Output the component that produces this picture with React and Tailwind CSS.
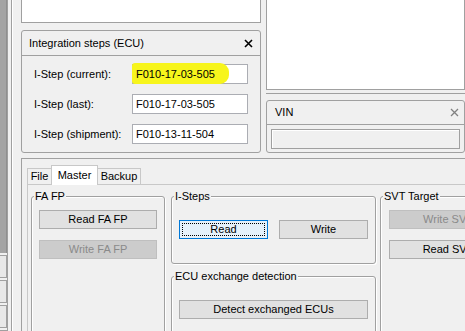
function XIcon({ color = "#000", sw = 1.6 }) {
  return (
    <svg width="9" height="9" viewBox="0 0 9 9" className="block">
      <path d="M1 1 L8 8 M8 1 L1 8" stroke={color} strokeWidth={sw} fill="none" />
    </svg>
  );
}

function Btn({ children, className = "", disabled = false, focused = false }) {
  if (disabled) {
    return (
      <div className={"h-[19px] border border-[#bfbfbf] bg-[#cccccc] text-[#8a8a8a] flex items-center justify-center whitespace-nowrap overflow-hidden shrink-0 " + className}>
        {children}
      </div>
    );
  }
  if (focused) {
    return (
      <div className={"relative h-[19px] border border-[#0078d7] bg-[#e5f1fb] flex items-center justify-center whitespace-nowrap shrink-0 " + className}>
        <span className="absolute inset-[2px] border border-dotted border-black" />
        {children}
      </div>
    );
  }
  return (
    <div className={"h-[19px] border border-[#adadad] bg-[#e1e1e1] flex items-center justify-center whitespace-nowrap overflow-hidden shrink-0 " + className}>
      {children}
    </div>
  );
}

function Group({ label, className = "", children }) {
  return (
    <div className={"relative border border-[#a0a0a0] rounded-[3px] shadow-[inset_1px_1px_0_#ffffff,1px_1px_0_#ffffff] shrink-0 " + className}>
      <span className="absolute -top-[7px] left-[2px] bg-[#f0f0f0] px-[1px] leading-[12px] whitespace-nowrap">{label}</span>
      {children}
    </div>
  );
}

function Row({ label, value, highlight = false }) {
  return (
    <div className="flex items-center h-[20px]">
      <div className="w-[110px] pl-[12px] whitespace-nowrap">{label}</div>
      <div className="relative w-[116px] h-[20px] border border-[#abadb3] bg-white flex items-center pl-[3px]">
        {highlight && (
          <span className="absolute -left-[1px] -top-[2px] w-[97px] h-[21px] bg-[#f7f51c] rounded-r-[9px] rounded-l-[3px]" />
        )}
        <span className="relative">{value}</span>
      </div>
    </div>
  );
}

export default function App() {
  return (
    <div className="w-[465px] h-[331px] overflow-hidden bg-[#f0f0f0] flex font-['Liberation_Sans',Arial,sans-serif] text-[11px] leading-none text-black">
      {/* left edge */}
      <div className="w-[21px] h-full flex shrink-0">
        <div className="w-[7px] h-full flex flex-col shrink-0">
          <div className="h-[253px] bg-[#a4a4a4] border-r border-[#8f8f8f] shrink-0" />
          <div className="flex flex-col gap-[2px] mt-[2px]">
            <div className="h-[23px] border border-l-0 border-[#a0a0a0] bg-[#e8e8e8]" />
            <div className="h-[23px] border border-l-0 border-[#a0a0a0] bg-[#e8e8e8]" />
            <div className="h-[23px] border border-l-0 border-[#a0a0a0] bg-[#e8e8e8]" />
            <div className="h-[23px] border border-l-0 border-[#a0a0a0] bg-[#e8e8e8]" />
          </div>
        </div>
        <div className="w-[1px] bg-[#a0a0a0] shrink-0" />
        <div className="w-[3px] shrink-0" />
        <div className="w-[1px] bg-[#a0a0a0] shrink-0" />
        <div className="w-[1px] bg-white shrink-0" />
      </div>

      {/* main */}
      <div className="w-[444px] h-full flex flex-col shrink-0">
        {/* top row */}
        <div className="h-[158px] flex shrink-0">
          {/* left column */}
          <div className="w-[240px] flex flex-col shrink-0">
            <div className="h-[23px] bg-white border-x border-b border-[#a0a0a0] shrink-0" />
            <div className="mt-[7px] h-[123px] border border-[#a0a0a0] rounded-[3px] flex flex-col shrink-0">
              <div className="h-[25px] border-b border-[#a0a0a0] flex items-center justify-between pl-[7px] pr-[7px] shrink-0">
                <span className="whitespace-nowrap">Integration steps (ECU)</span>
                <XIcon />
              </div>
              <div className="pt-[8px] flex flex-col gap-[10px]">
                <Row label="I-Step (current):" value="F010-17-03-505" highlight />
                <Row label="I-Step (last):" value="F010-17-03-505" />
                <Row label="I-Step (shipment):" value="F010-13-11-504" />
              </div>
            </div>
          </div>
          {/* right column */}
          <div className="ml-[5px] w-[199px] flex flex-col shrink-0">
            <div className="h-[90px] bg-white border-x border-b border-[#a0a0a0] shrink-0" />
            <div className="mt-[3px] h-[7px] border-t border-[#a0a0a0] shrink-0" />
            <div className="h-[53px] border border-[#a0a0a0] rounded-[3px] flex flex-col shrink-0">
              <div className="h-[24px] border-b border-[#a0a0a0] flex items-center justify-between pl-[8px] pr-[5px] shrink-0">
                <span>VIN</span>
                <XIcon color="#808080" sw={1.3} />
              </div>
              <div className="mx-[4px] mt-[4px] h-[20px] border border-[#a0a0a0] shadow-[inset_1px_1px_0_#ffffff] bg-[#f0f0f0]" />
            </div>
          </div>
        </div>

        {/* tab area */}
        <div className="flex-1 border-t border-l border-[#a0a0a0] pt-[6px] pl-[5px] flex flex-col min-h-0">
          <div className="flex items-end h-[19px] shrink-0 relative z-10">
            <div className="h-[16px] w-[25px] border border-[#c8c8c8] border-b-0 bg-[#f0f0f0] flex items-center justify-center">File</div>
            <div className="h-[20px] w-[47px] -mb-[1px] border border-[#c8c8c8] border-b-0 bg-white flex items-center justify-center -ml-[1px]">Master</div>
            <div className="h-[16px] w-[44px] border border-[#c8c8c8] border-b-0 bg-[#f0f0f0] flex items-center justify-center -ml-[1px]">Backup</div>
          </div>
          <div className="flex-1 border-t border-l border-[#c8c8c8] bg-[#f0f0f0] pl-[3px] pt-[11px] flex items-start min-h-0">
            <Group label="FA FP" className="w-[134px] h-[150px] pl-[7px] pt-[13px]">
              <div className="flex flex-col gap-[11px]">
                <Btn className="w-[118px]">Read FA FP</Btn>
                <Btn className="w-[118px]" disabled>Write FA FP</Btn>
              </div>
            </Group>
            <div className="ml-[6px] w-[205px] flex flex-col shrink-0">
              <Group label="I-Steps" className="h-[68px] pl-[7px] pt-[23px]">
                <div className="flex gap-[11px]">
                  <Btn className="w-[89px]" focused>Read</Btn>
                  <Btn className="w-[89px]">Write</Btn>
                </div>
              </Group>
              <Group label="ECU exchange detection" className="mt-[12px] h-[70px] pl-[7px] pt-[23px]">
                <Btn className="w-[189px]">Detect exchanged ECUs</Btn>
              </Group>
            </div>
            <Group label="SVT Target" className="ml-[4px] w-[130px] h-[150px] pl-[8px] pt-[13px]">
              <div className="flex flex-col gap-[11px]">
                <Btn className="w-[118px]" disabled>Write SVT</Btn>
                <Btn className="w-[118px]">Read SVT</Btn>
              </div>
            </Group>
          </div>
        </div>
      </div>
    </div>
  );
}
